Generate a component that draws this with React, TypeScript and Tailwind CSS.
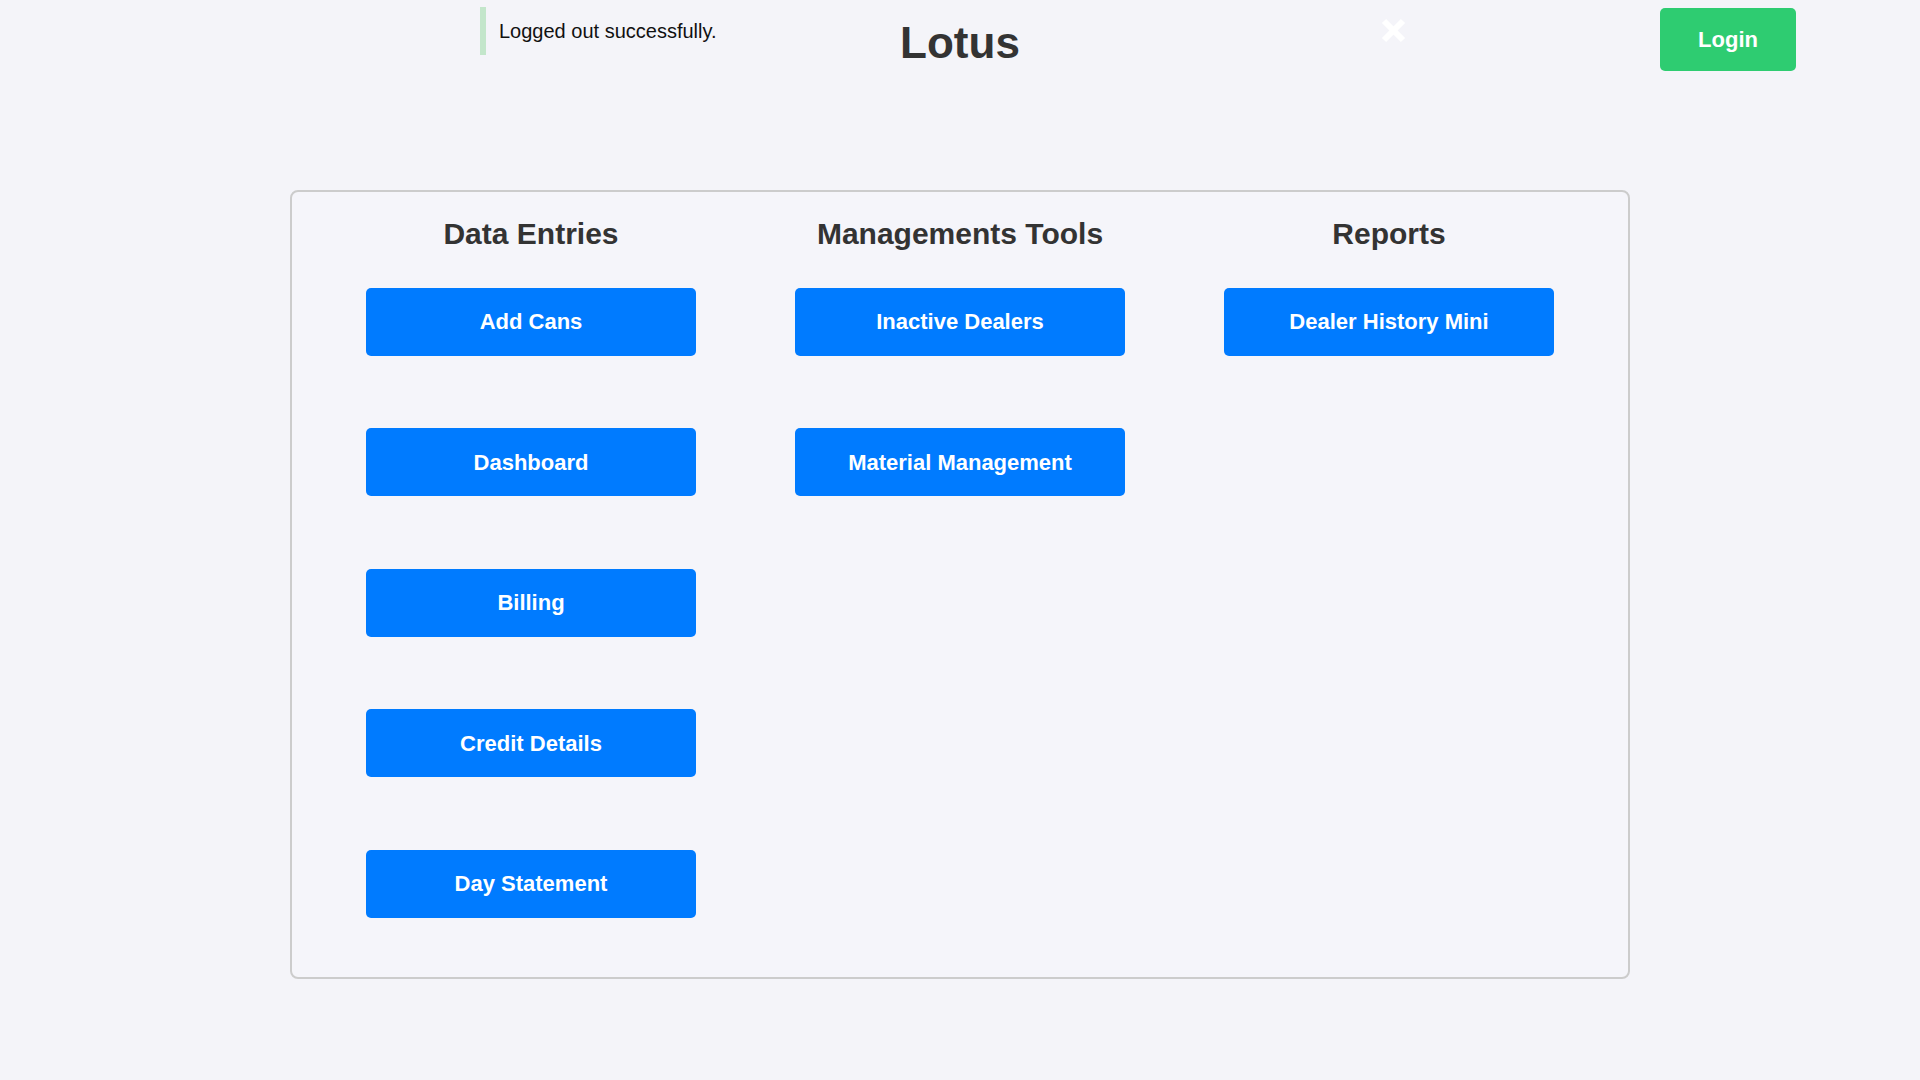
import React from 'react';

const columns = [
  { title: 'Data Entries', items: ['Add Cans', 'Dashboard', 'Billing', 'Credit Details', 'Day Statement'] },
  { title: 'Managements Tools', items: ['Inactive Dealers', 'Material Management'] },
  { title: 'Reports', items: ['Dealer History Mini'] },
];

function CloseIcon() {
  return (
    <svg width="25" height="25" viewBox="0 0 25 25" aria-hidden="true">
      <line x1="3" y1="3" x2="22" y2="22" stroke="white" strokeWidth="6" />
      <line x1="22" y1="3" x2="3" y2="22" stroke="white" strokeWidth="6" />
    </svg>
  );
}

export default function App() {
  return (
    <div className="relative min-h-[1080px] bg-[#f4f4f9] font-['Liberation_Sans',Arial,sans-serif] text-[#333]">
      {/* flash message sits over the header */}
      <div className="absolute left-[480px] top-[7px] flex h-[48px] w-[960px] items-start border-l-[6px] border-[#c3e6cb] pl-[13px] pt-[13px]">
        <span className="text-[20px] leading-[23px] text-[#111]">Logged out successfully.</span>
        <button className="ml-auto mr-[34px] -mt-[2px]">
          <CloseIcon />
        </button>
      </div>

      <header className="grid grid-cols-3 items-start">
        <div />
        <h1 className="mt-[17px] text-center text-[44px] font-bold leading-[51px] text-[#333]">Lotus</h1>
        <div className="flex justify-end pr-[124px]">
          <button className="mt-[8px] h-[63px] w-[136px] rounded-[5px] bg-[#2ecc71] text-[22px] font-bold text-white">
            Login
          </button>
        </div>
      </header>

      <main className="mx-auto mt-[119px] w-[1340px] rounded-[8px] border-2 border-[#cccccc] bg-[#f5f5fa] pb-[59px] pt-[25px]">
        <div className="grid grid-cols-[330px_330px_330px] justify-center gap-x-[99px]">
          {columns.map(col => (
            <div key={col.title} className="flex flex-col items-center">
              <h2 className="text-[30px] font-bold leading-[34.5px] text-[#333]">{col.title}</h2>
              <div className="mt-[36px] flex w-full flex-col gap-[72.5px]">
                {col.items.map(item => (
                  <button
                    key={item}
                    className="h-[68px] w-[330px] rounded-[5px] bg-[#007bff] text-[22px] font-bold text-white"
                  >
                    {item}
                  </button>
                ))}
              </div>
            </div>
          ))}
        </div>
      </main>
    </div>
  );
}
